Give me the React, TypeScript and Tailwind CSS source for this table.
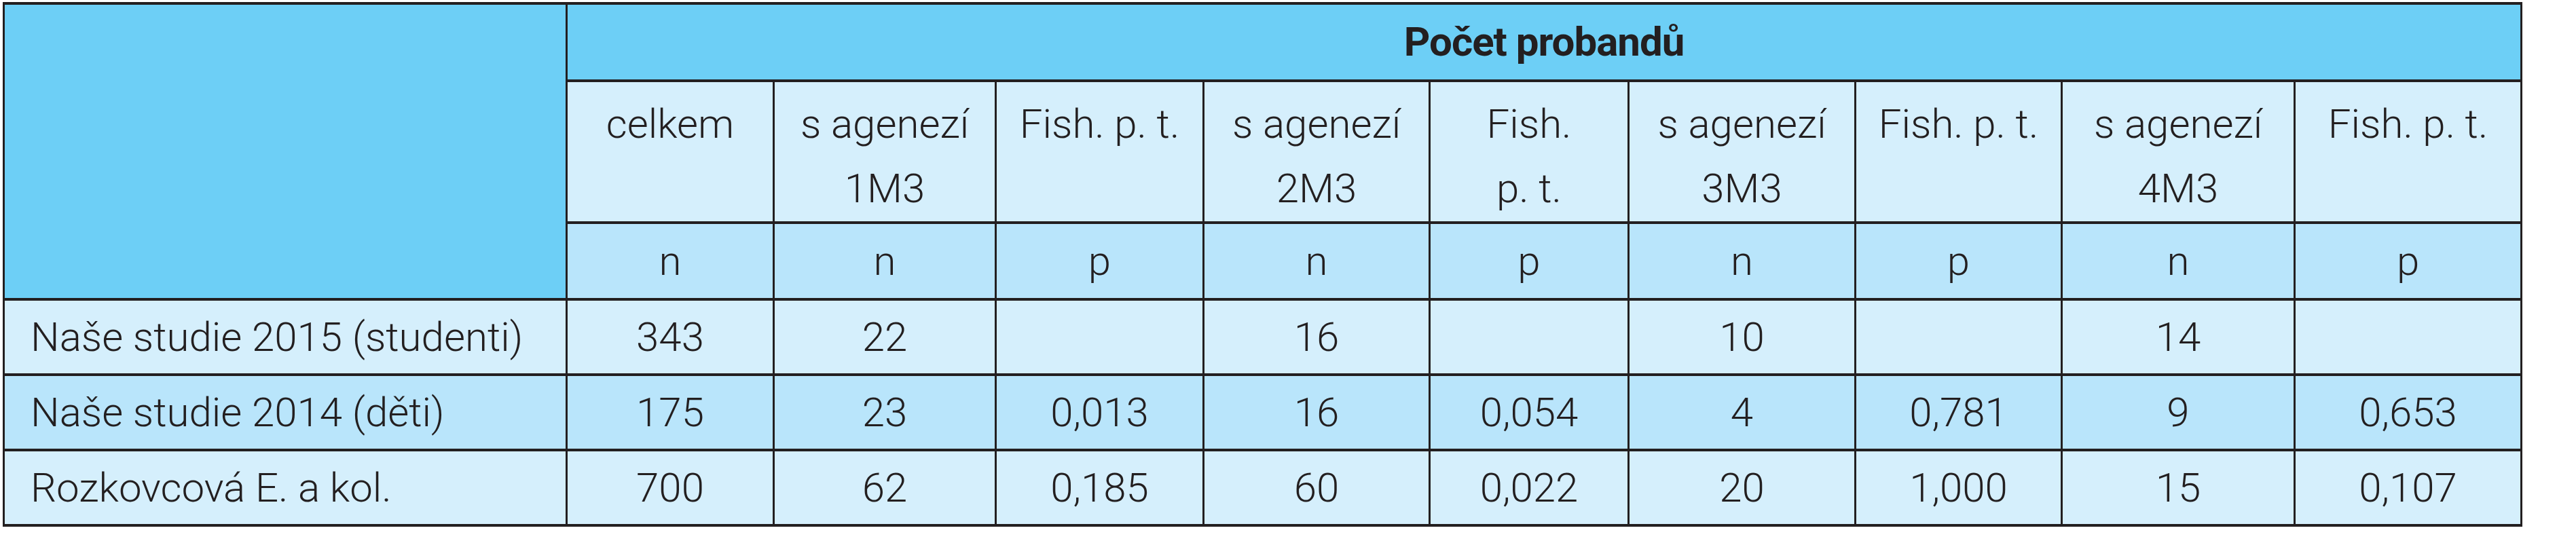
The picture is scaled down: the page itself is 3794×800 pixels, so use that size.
const border = "border-x-[3px] border-y-[4px] border-[#231f20]";

const SUB = [
  ["celkem"],
  ["s agenezí", "1M3"],
  ["Fish. p. t."],
  ["s agenezí", "2M3"],
  ["Fish.", "p. t."],
  ["s agenezí", "3M3"],
  ["Fish. p. t."],
  ["s agenezí", "4M3"],
  ["Fish. p. t."],
];

const UNITS = ["n", "n", "p", "n", "p", "n", "p", "n", "p"];

const ROWS: { name: string; vals: string[]; bg: string }[] = [
  { name: "Naše studie 2015 (studenti)", vals: ["343", "22", "", "16", "", "10", "", "14", ""], bg: "bg-[#d5effc]" },
  { name: "Naše studie 2014 (děti)", vals: ["175", "23", "0,013", "16", "0,054", "4", "0,781", "9", "0,653"], bg: "bg-[#b9e5fb]" },
  { name: "Rozkovcová E. a kol.", vals: ["700", "62", "0,185", "60", "0,022", "20", "1,000", "15", "0,107"], bg: "bg-[#d5effc]" },
];

export default function App() {
  return (
    <div className="bg-white w-[3794px] h-[800px] pt-[3px] pl-[4px] font-['Roboto','Liberation_Sans',sans-serif] font-light text-[60px] text-[#231f20]">
      <table className="table-fixed border-collapse w-[3708px]">
        <colgroup>
          <col className="w-[829px]" />
          <col className="w-[305px]" />
          <col className="w-[327px]" />
          <col className="w-[306px]" />
          <col className="w-[333px]" />
          <col className="w-[293px]" />
          <col className="w-[334px]" />
          <col className="w-[304px]" />
          <col className="w-[343px]" />
          <col className="w-[334px]" />
        </colgroup>
        <tbody>
          <tr className="h-[114px]">
            <td rowSpan={3} className={`${border} bg-[#6dcff6]`} />
            <td colSpan={9} className={`${border} bg-[#6dcff6] text-center font-bold tracking-[-1px]`}>
              Počet probandů
            </td>
          </tr>
          <tr className="h-[209px]">
            {SUB.map((lines, i) => (
              <td key={i} className={`${border} bg-[#d5effc] text-center align-top pt-[14px] leading-[95px] whitespace-nowrap`}>
                {lines.map((l, j) => (
                  <div key={j}>{l}</div>
                ))}
              </td>
            ))}
          </tr>
          <tr className="h-[113px]">
            {UNITS.map((u, i) => (
              <td key={i} className={`${border} bg-[#b9e5fb] text-center`}>
                {u}
              </td>
            ))}
          </tr>
          {ROWS.map((r) => (
            <tr key={r.name} className={`h-[111px] ${r.bg}`}>
              <td className={`${border} pl-[38px] whitespace-nowrap`}>{r.name}</td>
              {r.vals.map((v, i) => (
                <td key={i} className={`${border} text-center`}>
                  {v}
                </td>
              ))}
            </tr>
          ))}
        </tbody>
      </table>
    </div>
  );
}
